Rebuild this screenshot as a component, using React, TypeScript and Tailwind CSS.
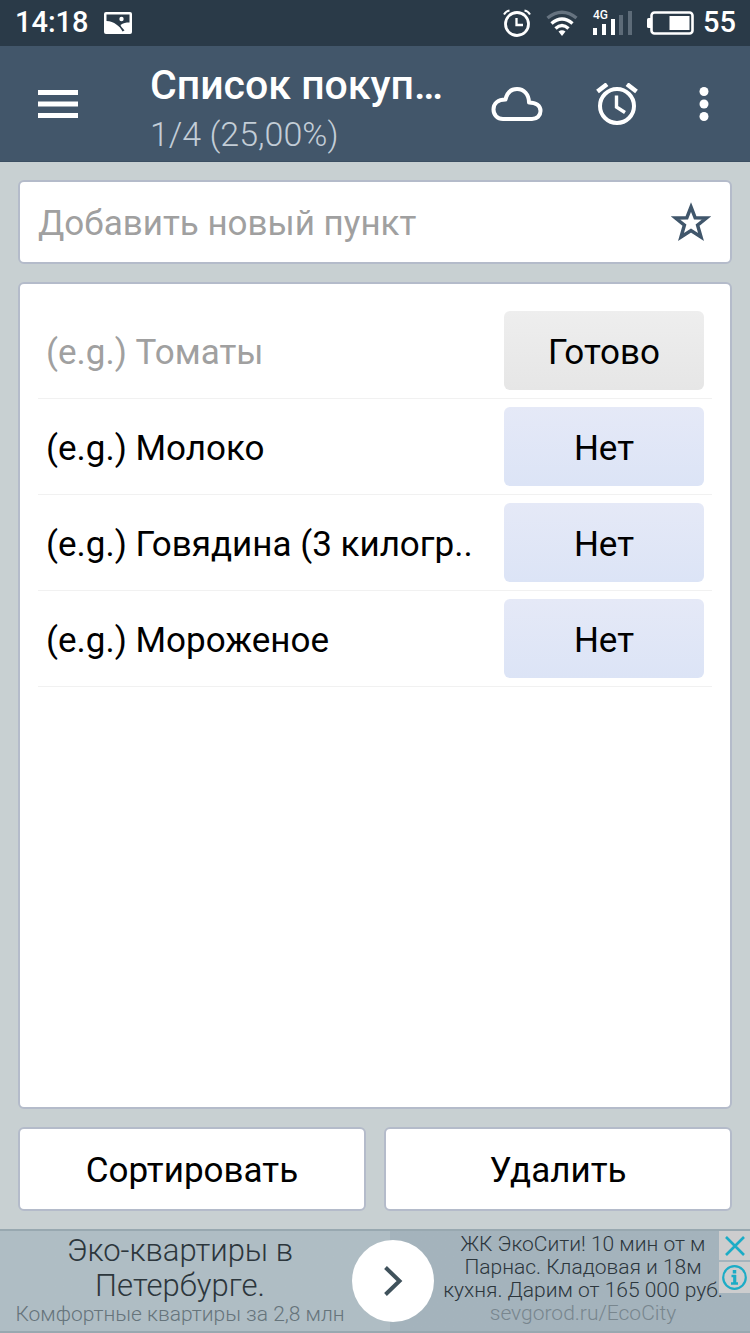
import React, { useState } from 'react';

interface ShoppingItem {
  id: number;
  name: string;
  done: boolean;
}

const initialItems: ShoppingItem[] = [
  { id: 1, name: '(e.g.) Томаты', done: true },
  { id: 2, name: '(e.g.) Молоко', done: false },
  { id: 3, name: '(e.g.) Говядина (3 килогр..', done: false },
  { id: 4, name: '(e.g.) Мороженое', done: false },
];

const StatusBar: React.FC = () => (
  <div className="flex h-[46px] shrink-0 items-center bg-[#2a3a48] pl-[15px] pr-[14px] text-[29px] font-medium text-white">
    <span>14:18</span>
    <svg className="ml-[15px] h-[22px] w-[28px]" viewBox="0 0 28 22">
      <rect width="28" height="22" rx="2" fill="#fff" />
      <path d="M2.500 2.500H25.500V10.500C22 10.500 19 11 16.500 13C17 15 19 16.500 20.500 18.500L18.500 19.500C16 14 10 9.500 2.500 9Z" fill="#2a3a48" />
      <circle cx="17.500" cy="7" r="2.200" fill="#fff" />
    </svg>
    <div className="ml-auto flex items-center">
      {/* Alarm */}
      <svg className="h-[28px] w-[28px]" viewBox="0 0 28 28" fill="none" stroke="#fff" strokeWidth="2.800">
        <circle cx="14" cy="15" r="11.500" />
        <path d="M13.500 9v7h6.500" strokeWidth="2.300" />
        <path d="M1 5.500Q3 2 6.500 1.500M27 5.500Q25 2 21.500 1.500" strokeWidth="2" />
      </svg>
      {/* Wifi */}
      <svg className="ml-[15px] h-[28px] w-[32px]" viewBox="0 0 32 28" fill="none" strokeWidth="3.400">
        <path d="M1.500 9Q16 -2.500 30.500 9" stroke="#667380" />
        <path d="M5.500 14.500Q16 5.500 26.500 14.500M9.500 19.500Q16 13.500 22.500 19.500" stroke="#fff" />
        <path d="M16 27l-3.500-4.500Q16 20 19.500 22.500Z" fill="#fff" />
      </svg>
      {/* Mobile signal */}
      <div className="relative ml-[15px] flex h-[24px] w-[39px] items-end justify-between">
        <span className="absolute -top-1 left-0 text-[12px] leading-4">4G</span>
        <span className="h-[7px] w-[4px] bg-white" />
        <span className="h-[11px] w-[4px] bg-white" />
        <span className="h-[16px] w-[4px] bg-white" />
        <span className="h-[20px] w-[4px] bg-[#5d6b78]" />
        <span className="h-[24px] w-[4px] bg-[#5d6b78]" />
      </div>
      {/* Battery */}
      <svg className="ml-[15px] h-[24px] w-[47px]" viewBox="0 0 47 24">
        <rect x="4.500" y="1.500" width="41" height="21" rx="3" fill="none" stroke="#fff" strokeWidth="2.600" />
        <path d="M0 8.500Q0 7 1.500 7H4V17H1.500Q0 17 0 15.500Z" fill="#fff" />
        <rect x="22.500" y="5" width="20" height="14" fill="#fff" />
      </svg>
      <span className="ml-[9px]">55</span>
    </div>
  </div>
);

const Header: React.FC = () => (
  <header className="flex h-[116px] shrink-0 items-center border-b border-[#3b4e62] bg-[#42566a] pl-[38px] pr-[9px] text-white">
    <button type="button" aria-label="Меню" className="mr-[72px]">
      <svg className="h-[28px] w-[40px]" viewBox="0 0 40 28" fill="#fff">
        <path d="M0 0h40v5H0zM0 11.500h40v5H0zM0 23h40v5H0z" />
      </svg>
    </button>
    <div className="min-w-0 flex-1 pt-2">
      <h1 className="whitespace-nowrap text-[41px] leading-[52px] font-medium">Список покуп…</h1>
      <p className="text-[34px] leading-[46px] font-light text-[#c3cdd7]">1/4 (25,00%)</p>
    </div>
    <button type="button" aria-label="Синхронизация" className="flex w-[100px] justify-center">
      <svg className="h-[34px] w-[52px]" viewBox="0 0 52 34" fill="none" stroke="#fff" strokeWidth="4" strokeLinejoin="round">
        <path d="M12 32C6.500 32 2.500 28 2.500 22.500C2.500 16.500 7 12.500 14.500 12.500C16 6 20 2 26 2C33 2 38 7.500 38 15.500C45 15.500 49.500 18.500 49.500 24C49.500 28.500 46 32 41 32Z" />
      </svg>
    </button>
    <button type="button" aria-label="Напоминание" className="flex w-[100px] justify-center">
      <svg className="h-[42px] w-[42px]" viewBox="0 0 42 42" fill="none" stroke="#fff" strokeWidth="4">
        <circle cx="21" cy="23" r="17" />
        <path d="M20.500 12.500V24L29 29.500" strokeWidth="3.400" />
        <path d="M1.500 8.500L11 1.200M40.500 8.500L31 1.200" strokeWidth="4.500" />
      </svg>
    </button>
    <button type="button" aria-label="Ещё" className="flex w-[74px] justify-center">
      <svg className="h-[34px] w-[10px]" viewBox="0 0 10 34" fill="#fff">
        <circle cx="5" cy="4.500" r="4.500" />
        <circle cx="5" cy="17" r="4.500" />
        <circle cx="5" cy="29.500" r="4.500" />
      </svg>
    </button>
  </header>
);

const AdBanner: React.FC = () => (
  <aside className="relative flex h-[104px] shrink-0 items-center border-y-2 border-[#98a8b0] bg-linear-to-r from-[#afbdc4] from-52% to-[#a4b3bc] to-52% pl-2 pr-[18px] text-center font-light">
    <div className="min-w-0 flex-[344] pb-1 whitespace-nowrap">
      <p className="text-[31px] leading-[35px] text-[#2c363c]">
        Эко-квартиры в
        <br />
        Петербурге.
      </p>
      <p className="text-[21px] leading-[23px] text-[#66747b]">Комфортные квартиры за 2,8 млн</p>
    </div>
    <a href="#ad" aria-label="Открыть" className="flex size-[82px] shrink-0 items-center justify-center rounded-full bg-white">
      <svg className="h-[32px] w-[20px]" viewBox="0 0 20 32" fill="none" stroke="#40525c" strokeWidth="4">
        <path d="M2.500 2.500L16.500 16L2.500 29.500" />
      </svg>
    </a>
    <div className="min-w-0 flex-[298] pb-1 whitespace-nowrap text-[21px] leading-[23px] text-[#2c363c]">
      <p className="flex flex-col items-center">
        <span>ЖК ЭкоСити! 10 мин от м</span>
        <span>Парнас. Кладовая и 18м</span>
        <span>кухня. Дарим от 165 000 руб.</span>
      </p>
      <p className="text-[#78868e]">sevgorod.ru/EcoCity</p>
    </div>
    <div className="absolute right-0 top-0 flex flex-col gap-0.5">
      <button type="button" aria-label="Закрыть рекламу" className="flex h-[29px] w-[31px] items-center justify-center bg-[#cdcdce]">
        <svg className="size-5" viewBox="0 0 20 20" stroke="#1cacc6" strokeWidth="2.600">
          <path d="M1 1L19 19M19 1L1 19" />
        </svg>
      </button>
      <button type="button" aria-label="О рекламе" className="flex h-[31px] w-[31px] items-center justify-center bg-[#cdcdce]">
        <svg className="size-[25px]" viewBox="0 0 25 25" fill="none" stroke="#1cacc6" strokeWidth="2.200">
          <circle cx="12.500" cy="12.500" r="11.300" />
          <path d="M12.500 5v3.500" strokeWidth="3.500" />
          <path d="M9.500 11h3.200v7.500M9 18.500h7" strokeWidth="2.400" />
          <path d="M12.800 10v9" strokeWidth="3" />
        </svg>
      </button>
    </div>
  </aside>
);

export default function App() {
  const [items, setItems] = useState(initialItems);
  const [draft, setDraft] = useState('');

  const toggle = (id: number) =>
    setItems((prev) => prev.map((item) => (item.id === id ? { ...item, done: !item.done } : item)));

  return (
    <div className="flex min-h-screen flex-col bg-[#c8d0d2] font-[Roboto,'Noto_Sans',sans-serif] text-black">
      <StatusBar />
      <Header />

      <main className="flex flex-1 flex-col gap-[18px] p-[18px]">
        <div className="flex h-[84px] items-center rounded-md border-2 border-[#b4bbca] bg-white pl-[18px] pr-[19px]">
          <input
            type="text"
            aria-label="Добавить новый пункт"
            placeholder="Добавить новый пункт"
            className="min-w-0 flex-1 bg-transparent pt-1 text-[35px] leading-[48px] placeholder-[#a0a0a0] outline-none"
            value={draft}
            onChange={(e) => setDraft(e.target.value)}
          />
          <button type="button" aria-label="Избранное">
            <svg className="size-10" viewBox="0 0 40 40" fill="none" stroke="#40566b" strokeWidth="3.500">
              <path d="M20 5L24.200 15.800L35.500 16L26.600 23.200L30 35L20 28.500L10 35L13.400 23.200L4.500 16L15.800 15.800Z" />
            </svg>
          </button>
        </div>

        <ul className="flex-1 rounded-md border-2 border-[#b4bbca] bg-white px-[18px] pt-[19px] pb-[18px]">
          {items.map((item) => (
            <li key={item.id} className="flex h-24 items-center justify-between border-b border-[#f1f1f1] px-2 text-[35px] leading-[48px]">
              <span className={item.done ? 'truncate pt-1 text-[#a0a0a0]' : 'truncate pt-1'}>{item.name}</span>
              <button
                type="button"
                onClick={() => toggle(item.id)}
                className={
                  item.done
                    ? 'h-[79px] w-[200px] shrink-0 rounded-md bg-linear-to-b from-[#eeeeee] to-[#e6e6e6] pt-1'
                    : 'h-[79px] w-[200px] shrink-0 rounded-md bg-linear-to-b from-[#e5e9f7] to-[#dce4f6] pt-1'
                }
              >
                {item.done ? 'Готово' : 'Нет'}
              </button>
            </li>
          ))}
        </ul>

        <div className="grid grid-cols-2 gap-[18px] text-[35px] leading-[48px]">
          <button type="button" className="h-[84px] rounded-md border-2 border-[#b4bbca] bg-white pt-1">
            Сортировать
          </button>
          <button type="button" className="h-[84px] rounded-md border-2 border-[#b4bbca] bg-white pt-1">
            Удалить
          </button>
        </div>
      </main>

      <AdBanner />
    </div>
  );
}
